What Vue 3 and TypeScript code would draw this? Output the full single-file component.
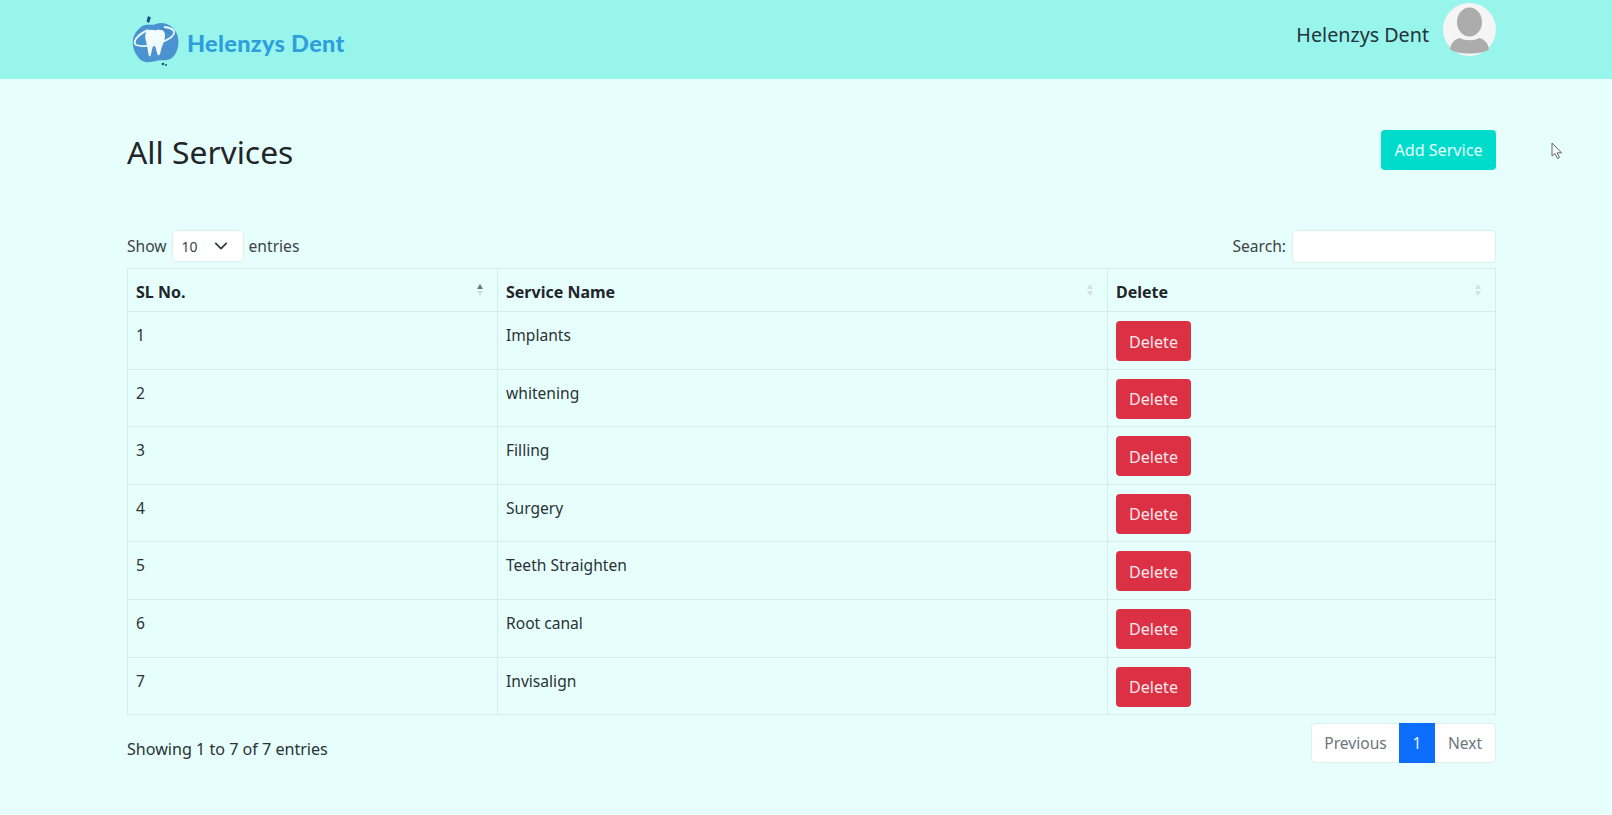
<script setup lang="ts">
const services: string[] = ['Implants', 'whitening', 'Filling', 'Surgery', 'Teeth Straighten', 'Root canal', 'Invisalign']
</script>

<template>
  <div class="page">
    <header class="topbar">
      <div class="brand">
        <svg class="logo" width="50" height="52" viewBox="0 0 50 52">
          <path d="M10 12C15 8 19 11 25 9C33 6 42 10 46 19C49 27 47 37 42 42C37 47 31 44 25 46C18 48 11 48 7 42C3 37 1 30 2 24C3 19 6 15 10 12Z" fill="#4b92d0"/>
          <path d="M16 16C19 13 23 16 26 15C30 13 34 16 34 20C34 27 31 30 30 35C29 41 27 42 26 38C25 34 25 31 23 31C21 31 21 37 19.500 41C18 43 17 38 16.500 33C16 27 12 21 16 16Z" fill="#f2fcfc"/>
          <path d="M5 30C1 27 6 20 17 15" fill="none" stroke="#e9fafa" stroke-width="2"/>
          <path d="M5 30C13 33 30 29 39 23C46 18 44 13 33 12" fill="none" stroke="#e9fafa" stroke-width="1.800"/>
          <path d="M28 14C33 14 38 16 39 19" fill="none" stroke="#3f86c6" stroke-width="1.500"/>
          <path d="M17 1L20 2.500L18 8L15.500 6.500Z" fill="#1d4f86"/>
          <circle cx="32" cy="49" r="1.300" fill="#1d4f86"/>
          <circle cx="35" cy="50" r="1" fill="#1d4f86"/>
        </svg>
        <span class="brand-name">Helenzys Dent</span>
      </div>
      <div class="user">
        <span class="user-name">Helenzys Dent</span>
        <svg class="avatar" width="53" height="53" viewBox="0 0 53 53">
          <circle cx="26.500" cy="26.500" r="26.500" fill="#f5f5f5"/>
          <ellipse cx="26.500" cy="19" rx="12.500" ry="14.500" fill="#acacac"/>
          <path d="M7 46C8 41 10 37 17 35C21 38 32 38 36 35C43 37 45 41 46 46C41 52 12 52 7 46Z" fill="#acacac"/>
        </svg>
      </div>
    </header>

    <main class="content">
      <div class="title-row">
        <h1>All Services</h1>
        <button class="add-btn">Add Service</button>
      </div>

      <div class="controls">
        <label class="length">
          Show
          <span class="select">10
            <svg width="14" height="14" viewBox="0 0 16 16"><path d="M2 5l6 6 6-6" fill="none" stroke="#343a40" stroke-width="2" stroke-linecap="round" stroke-linejoin="round"/></svg>
          </span>
          entries
        </label>
        <label class="search">Search: <input type="text" /></label>
      </div>

      <table class="grid">
        <colgroup>
          <col class="c1" />
          <col class="c2" />
          <col />
        </colgroup>
        <thead>
          <tr>
            <th>SL No.<span class="sort first"><i class="up"></i><i class="down"></i></span></th>
            <th>Service Name<span class="sort"><i class="up"></i><i class="down"></i></span></th>
            <th>Delete<span class="sort"><i class="up"></i><i class="down"></i></span></th>
          </tr>
        </thead>
        <tbody>
          <tr v-for="(s, i) in services" :key="s">
            <td>{{ i + 1 }}</td>
            <td>{{ s }}</td>
            <td><button class="del-btn">Delete</button></td>
          </tr>
        </tbody>
      </table>

      <div class="footer">
        <span class="info">Showing 1 to 7 of 7 entries</span>
        <nav class="pager">
          <span class="pg prev">Previous</span>
          <span class="pg active">1</span>
          <span class="pg next">Next</span>
        </nav>
      </div>
    </main>

    <svg class="cursor" width="12" height="18" viewBox="0 0 12 18">
      <path d="M1 1V14L4 11.500L6.500 16.500L8.500 15.500L6.200 10.800H10.500Z" fill="#f4fbfb" stroke="#555" stroke-width="0.900"/>
    </svg>
  </div>
</template>

<style>
html, body { margin: 0; background: #e6fffc; }
</style>

<style scoped>
.page {
  position: relative;
  height: 815px;
  overflow: hidden;
  background: #e6fffc;
  color: #212529;
  font-family: "Noto Sans", "Open Sans", sans-serif;
  font-size: 15.6px;
}
.topbar {
  height: 79px;
  box-sizing: border-box;
  background: #98f5ec;
  padding: 0 116px 0 131px;
  display: flex;
  justify-content: space-between;
  align-items: flex-start;
}
.brand { display: flex; align-items: center; gap: 6px; margin-top: 15px; }
.brand-name {
  font-family: "Lato", sans-serif;
  font-weight: 900;
  font-size: 23.5px;
  letter-spacing: 0.3px;
  color: #2f9fdc;
  margin-top: 4px;
}
.user { display: flex; align-items: center; gap: 14px; margin-top: 3px; }
.user-name { font-size: 19.700px; margin-top: 10px; color: #22343a; }
.avatar { display: block; }
.content { padding: 0 116px 0 127px; }
.title-row {
  box-sizing: border-box;
  height: 91px;
  padding-top: 51px;
  display: flex;
  justify-content: space-between;
  align-items: flex-start;
}
h1 {
  margin: 0;
  font-size: 31.800px;
  font-weight: 400;
  line-height: 44px;
  color: #212529;
}
.add-btn {
  width: 115px;
  height: 40px;
  background: #00dccb;
  color: #e6fffc;
  border: 0;
  border-radius: 4px;
  font: inherit;
  font-size: 16.100px;
}
.controls {
  margin-top: 60px;
  height: 38px;
  display: flex;
  justify-content: space-between;
  align-items: flex-start;
  color: #3b4247;
}
.length, .search { display: flex; align-items: center; height: 32px; }
.select {
  box-sizing: border-box;
  width: 72px;
  height: 32px;
  margin: 0 5px;
  padding: 0 15px 0 9px;
  background: #fff;
  border: 1px solid #dceeee;
  border-radius: 4px;
  display: flex;
  align-items: center;
  justify-content: space-between;
  font-size: 14px;
}
.search input {
  box-sizing: border-box;
  width: 204px;
  height: 33px;
  margin-left: 6px;
  background: #fff;
  border: 1px solid #dceeee;
  border-radius: 4px;
}
.grid {
  width: 100%;
  table-layout: fixed;
  border-collapse: collapse;
  border: 1px solid #d5eeeb;
}
.c1 { width: 370px; }
.c2 { width: 610px; }
th, td {
  border: 1px solid #d5eeeb;
  padding: 0 8px;
  text-align: left;
  box-sizing: border-box;
}
th {
  position: relative;
  height: 43px;
  padding-top: 3px;
  font-weight: 700;
  font-size: 16px;
}
td {
  height: 57.600px;
  vertical-align: top;
  padding-top: 12px;
  color: #2b3135;
}
td:last-child { padding-top: 9px; }
.del-btn {
  display: block;
  width: 75px;
  height: 40px;
  padding-top: 2px;
  background: #dc3044;
  color: #fde8ea;
  border: 0;
  border-radius: 4px;
  font: inherit;
  font-size: 16.100px;
}
.sort {
  position: absolute;
  right: 14px;
  top: 15px;
  display: flex;
  flex-direction: column;
  gap: 2px;
}
.sort i {
  display: block;
  width: 0;
  height: 0;
  border-left: 3px solid transparent;
  border-right: 3px solid transparent;
}
.sort .up { border-bottom: 5px solid #cfe3e2; }
.sort .down { border-top: 5px solid #cfe3e2; }
.sort.first .up { border-bottom-color: #6c7a7c; }
.footer {
  margin-top: 8px;
  display: flex;
  justify-content: space-between;
  align-items: flex-start;
}
.info { font-size: 16.100px; color: #2b3135; margin-top: 15px; }
.pager {
  display: flex;
  height: 40px;
  background: #fff;
  border: 1px solid #e0f0ef;
  border-radius: 4px;
  box-sizing: border-box;
  color: #6c757d;
}
.pg { display: flex; align-items: center; justify-content: center; }
.prev { width: 87px; }
.active { width: 36px; background: #0d6efd; color: #e6f0ff; margin: -1px 0; }
.next { width: 60px; }
.cursor { position: absolute; left: 1551px; top: 142px; }
</style>
